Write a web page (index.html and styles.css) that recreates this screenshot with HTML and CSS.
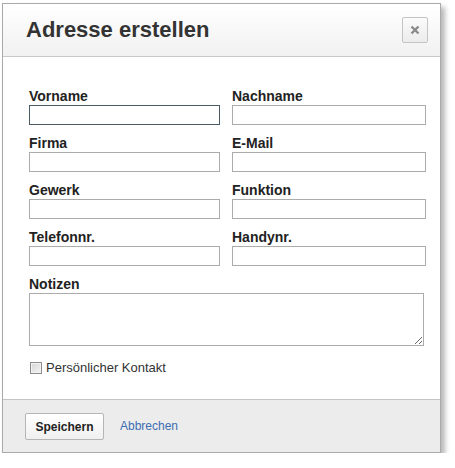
FILE: index.html
```html
<!DOCTYPE html>
<html lang="de">
<head>
<meta charset="utf-8">
<title>Adresse erstellen</title>
<link rel="stylesheet" href="styles.css">
</head>
<body>
<div class="dialog">
  <div class="header">
    <h1 class="title">Adresse erstellen</h1>
    <button class="close" type="button" aria-label="Schließen">
      <svg width="10" height="10" viewBox="0 0 10 10"><path d="M1.5 1.5 L8.5 8.5 M8.5 1.5 L1.5 8.5" stroke="#8a8a8a" stroke-width="2.4" stroke-linecap="butt"/></svg>
    </button>
  </div>
  <div class="body">
    <div class="grid">
      <div class="field"><label class="label">Vorname</label><input class="input focused" type="text"></div>
      <div class="field"><label class="label">Nachname</label><input class="input" type="text"></div>
      <div class="field"><label class="label">Firma</label><input class="input" type="text"></div>
      <div class="field"><label class="label">E-Mail</label><input class="input" type="text"></div>
      <div class="field"><label class="label">Gewerk</label><input class="input" type="text"></div>
      <div class="field"><label class="label">Funktion</label><input class="input" type="text"></div>
      <div class="field"><label class="label">Telefonnr.</label><input class="input" type="text"></div>
      <div class="field"><label class="label">Handynr.</label><input class="input" type="text"></div>
    </div>
    <div class="notes">
      <label class="label">Notizen</label>
      <textarea class="textarea"></textarea>
    </div>
    <label class="check-row"><input class="checkbox" type="checkbox"><span>Persönlicher Kontakt</span></label>
  </div>
  <div class="footer">
    <button class="btn" type="button">Speichern</button>
    <a class="link" href="#">Abbrechen</a>
  </div>
</div>
</body>
</html>
```
FILE: styles.css
```css
html, body {
  margin: 0;
  padding: 0;
  background: #ffffff;
}
body {
  font-family: "Liberation Sans", Arial, sans-serif;
  color: #222;
}
.dialog {
  box-sizing: border-box;
  width: 439px;
  margin: 3px 0 0 2px;
  border: 1px solid #a9a9a9;
  background: #fff;
  box-shadow: 4px 4px 5px rgba(0, 0, 0, 0.28);
}
.header {
  height: 52px;
  border-bottom: 1px solid #c9c9c9;
  background: linear-gradient(#ffffff, #f1f1f1);
  display: flex;
  align-items: center;
  justify-content: space-between;
  padding: 0 12px 0 23px;
}
.title {
  margin: 0;
  font-size: 22px;
  line-height: 26px;
  font-weight: bold;
  color: #333;
}
.close {
  box-sizing: border-box;
  width: 26px;
  height: 26px;
  padding: 0;
  border: 1px solid #c4c4c4;
  border-radius: 2px;
  background: linear-gradient(#fbfbfb, #ececec);
  display: flex;
  align-items: center;
  justify-content: center;
}
.body {
  padding: 31px 0 23px 26px;
}
.grid {
  display: grid;
  grid-template-columns: 191px 194px;
  column-gap: 12px;
  row-gap: 10px;
}
.field {
  display: flex;
  flex-direction: column;
}
.label {
  display: block;
  font-size: 14px;
  line-height: 16px;
  font-weight: bold;
  color: #222;
  margin-bottom: 1px;
}
.input {
  box-sizing: border-box;
  height: 20px;
  width: 100%;
  margin: 0;
  border: 1px solid #ababab;
  background: #fff;
  font: 13px "Liberation Sans", Arial, sans-serif;
  outline: none;
}
.input.focused {
  border-color: #4b5b66;
}
.notes {
  margin-top: 10px;
  display: flex;
  flex-direction: column;
}
.textarea {
  box-sizing: border-box;
  width: 395px;
  height: 53px;
  margin: 0;
  border: 1px solid #ababab;
  font: 13px "Liberation Sans", Arial, sans-serif;
  outline: none;
}
.check-row {
  display: flex;
  align-items: center;
  margin-top: 13px;
  font-size: 13px;
  line-height: 17px;
  color: #333;
}
.checkbox {
  appearance: none;
  -webkit-appearance: none;
  box-sizing: border-box;
  width: 12px;
  height: 12px;
  margin: 0 4px 0 1px;
  border: 1px solid #8d8d8d;
  background: linear-gradient(135deg, #d6d6d6, #f4f4f4);
  box-shadow: inset 0 0 0 1px #f2f2f2;
}
.footer {
  height: 53px;
  border-top: 1px solid #c4c4c4;
  background: #ececec;
  display: flex;
  align-items: flex-start;
  padding: 13px 0 0 22px;
  box-sizing: border-box;
}
.btn {
  box-sizing: border-box;
  width: 79px;
  height: 27px;
  padding: 0;
  border: 1px solid #b5b5b5;
  border-radius: 2px;
  background: linear-gradient(#ffffff, #f0f0f0);
  font: bold 12px "Liberation Sans", Arial, sans-serif;
  color: #222;
}
.link {
  margin-left: 16px;
  font-size: 12px;
  line-height: 27px;
  color: #3c6db2;
  text-decoration: none;
}
```
